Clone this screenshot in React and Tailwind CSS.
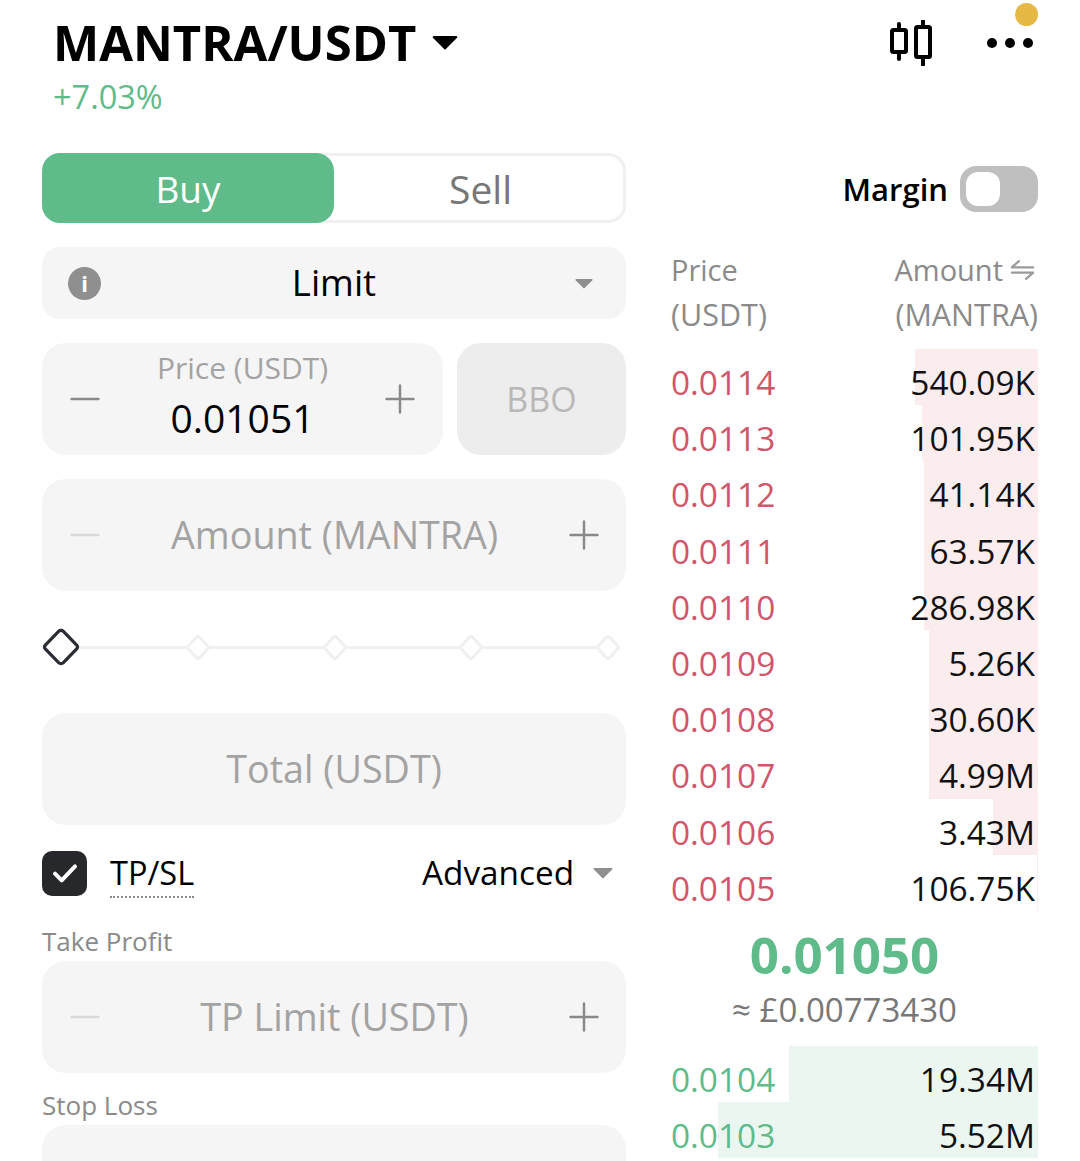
import { Plus, Minus } from 'lucide-react';

const FONT = "font-['Open_Sans','Liberation_Sans',sans-serif]";

const asks = [
  { price: '0.0114', amount: '540.09K', bar: 'w-[123px]' },
  { price: '0.0113', amount: '101.95K', bar: 'w-[116px]' },
  { price: '0.0112', amount: '41.14K', bar: 'w-[114px]' },
  { price: '0.0111', amount: '63.57K', bar: 'w-[114px]' },
  { price: '0.0110', amount: '286.98K', bar: 'w-[114px]' },
  { price: '0.0109', amount: '5.26K', bar: 'w-[109px]' },
  { price: '0.0108', amount: '30.60K', bar: 'w-[109px]' },
  { price: '0.0107', amount: '4.99M', bar: 'w-[109px]' },
  { price: '0.0106', amount: '3.43M', bar: 'w-[45px]' },
  { price: '0.0105', amount: '106.75K', bar: 'w-px' },
];

const bids = [
  { price: '0.0104', amount: '19.34M', bar: 'w-[249px]' },
  { price: '0.0103', amount: '5.52M', bar: 'w-[320px]' },
];

const Triangle = ({ className }) => (
  <svg viewBox="0 0 24 14" className={className} fill="currentColor">
    <path d="M1.5 1h21a1 1 0 0 1 .8 1.6L12.8 13a1 1 0 0 1-1.6 0L.7 2.6A1 1 0 0 1 1.5 1z" />
  </svg>
);

const Diamond = ({ active }) => (
  <svg
    viewBox="0 0 40 40"
    preserveAspectRatio="none"
    className={active ? 'w-[38px] h-[38px] text-[#2a2d33]' : 'w-[24px] h-[25px] text-[#eef0f1]'}
    fill="#fff"
    stroke="currentColor"
    strokeWidth={active ? 3.4 : 5}
  >
    <path d="M17.5 3.5a3.5 3.5 0 0 1 5 0l14 14.5a3 3 0 0 1 0 4l-14 14.5a3.5 3.5 0 0 1-5 0L3.5 22a3 3 0 0 1 0-4z" />
  </svg>
);

const Field = ({ label }) => (
  <div className="h-[112px] rounded-[24px] bg-[#f5f5f5] flex items-center justify-between pl-[20px] pr-[19px]">
    <Minus className="w-[46px] h-[46px] text-[#d9d9d9]" strokeWidth={1.3} />
    <span className="text-[37.7px] font-medium text-[#a3a3a3]">{label}</span>
    <Plus className="w-[46px] h-[46px] text-[#8a8a8a]" strokeWidth={1.3} />
  </div>
);

const Row = ({ row, color, barColor }) => (
  <div className="relative h-[56.2px] flex items-center justify-between pt-[10px] text-[33.4px]">
    <div className={`absolute right-0 top-0 bottom-0 ${row.bar} ${barColor}`} />
    <span className={`relative ${color}`}>{row.price}</span>
    <span className="relative pr-[3px] text-[#111]">{row.amount}</span>
  </div>
);

const App = () => {
  return (
    <div className={`h-[1161px] w-[1080px] overflow-hidden bg-white ${FONT}`}>
      {/* Header */}
      <div className="relative h-[153px] pl-[53px] pr-[42px] flex justify-between">
        <div>
          <div className="flex items-center h-[44px] mt-[20px]">
            <h1 className="text-[49px] leading-none font-bold text-black">MANTRA/USDT</h1>
            <Triangle className="w-[26px] h-[15px] ml-[16px] text-black" />
          </div>
          <div className="mt-[13px] text-[32.5px] leading-[40px] text-[#5fbb8a]">+7.03%</div>
        </div>
        <div className="flex items-start pt-[20px]">
          <svg viewBox="0 0 44 46" className="w-[44px] h-[46px] text-black" fill="none" stroke="currentColor" strokeWidth="4" strokeLinecap="round" strokeLinejoin="round">
            <rect x="3" y="10" width="14" height="22" rx="1.5" />
            <path d="M10 4v6M10 32v7" />
            <rect x="27" y="7" width="14" height="30" rx="1.5" />
            <path d="M34 1v6M34 37v8" />
          </svg>
          <div className="relative ml-[54px] mr-[5px] mt-[18px] flex gap-[8px]">
            <span className="w-[10px] h-[10px] rounded-full bg-black" />
            <span className="w-[10px] h-[10px] rounded-full bg-black" />
            <span className="w-[10px] h-[10px] rounded-full bg-black" />
            <span className="absolute -right-[5px] -top-[35px] w-[23px] h-[23px] rounded-full bg-[#e6b945]" />
          </div>
        </div>
      </div>

      <div className="flex pl-[42px] pr-[42px] justify-between">
        {/* Order form */}
        <div className="w-[584px]">
          <div className="h-[70px] flex rounded-[18px] border-[3px] border-[#f0f0f0] border-l-0 relative">
            <div className="w-[292px] -my-[3px] pt-[2px] rounded-[18px] bg-[#5fbb8a] flex items-center justify-center text-[37px] text-white">Buy</div>
            <div className="flex-1 pt-[2px] pl-[4px] flex items-center justify-center text-[39px] text-[#777]">Sell</div>
          </div>

          <div className="mt-[24px] h-[72px] rounded-[18px] bg-[#f5f5f5] flex items-center justify-between pl-[26px] pr-[33px]">
            <span className="w-[33px] h-[33px] rounded-full bg-[#8f8f8f] text-white flex items-center justify-center text-[22px] font-bold">i</span>
            <span className="mr-[8px] pb-[2px] text-[36.5px] text-black">Limit</span>
            <Triangle className="w-[18px] h-[11px] text-[#8f8f8f]" />
          </div>

          <div className="mt-[24px] flex gap-[14px]">
            <div className="flex-1 h-[112px] rounded-[24px] bg-[#f5f5f5] flex items-center justify-between pl-[20px] pr-[20px]">
              <Minus className="w-[46px] h-[46px] text-[#8a8a8a]" strokeWidth={1.3} />
              <div className="text-center pb-[7px]">
                <div className="text-[30px] leading-[44px] text-[#a3a3a3]">Price (USDT)</div>
                <div className="text-[39px] leading-[55px] font-medium text-black">0.01051</div>
              </div>
              <Plus className="w-[46px] h-[46px] text-[#8a8a8a]" strokeWidth={1.3} />
            </div>
            <div className="w-[169px] h-[112px] rounded-[24px] bg-[#ededed] flex items-center justify-center text-[34px] text-[#b8b8b8]">BBO</div>
          </div>

          <div className="mt-[24px]">
            <Field label="Amount (MANTRA)" />
          </div>

          {/* Slider */}
          <div className="relative mt-[37px] h-[38px] flex items-center gap-[112.5px]">
            <div className="absolute left-[20px] right-[10px] h-[3px] bg-[#eef0f1]" />
            <span className="relative -mr-[6.5px]"><Diamond active /></span>
            <span className="relative"><Diamond /></span>
            <span className="relative"><Diamond /></span>
            <span className="relative"><Diamond /></span>
            <span className="relative"><Diamond /></span>
          </div>

          <div className="mt-[47px] h-[112px] rounded-[24px] bg-[#f5f5f5] flex items-center justify-center text-[37.7px] font-medium text-[#a3a3a3]">Total (USDT)</div>

          <div className="mt-[24px] h-[48px] flex items-center justify-between">
            <div className="flex items-center">
              <span className="w-[45px] h-[45px] rounded-[10px] bg-[#26282c] flex items-center justify-center">
                <svg viewBox="0 0 24 24" className="w-[32px] h-[32px] text-white" fill="none" stroke="currentColor" strokeWidth="3" strokeLinecap="round" strokeLinejoin="round">
                  <path d="M4.5 12.5l5 5L19.5 7" />
                </svg>
              </span>
              <span className="ml-[23px] pt-[2px] text-[32.5px] leading-[46px] text-black border-b-2 border-dotted border-[#8a8a8a]">TP/SL</span>
            </div>
            <div className="flex items-center pr-[13px]">
              <span className="text-[33.3px] text-black">Advanced</span>
              <Triangle className="w-[20px] h-[12px] ml-[19px] text-[#8f8f8f]" />
            </div>
          </div>

          <div className="mt-[26px] h-[38px] text-[26px] leading-[36px] text-[#8a8a8a]">Take Profit</div>
          <Field label="TP Limit (USDT)" />
          <div className="mt-[13px] h-[38px] text-[26px] leading-[38px] text-[#8a8a8a]">Stop Loss</div>
          <div className="mt-[1px] h-[112px] rounded-[24px] bg-[#f5f5f5]" />
        </div>

        {/* Order book */}
        <div className="w-[367px]">
          <div className="h-[70px] pt-[2px] flex items-center justify-end gap-[12px]">
            <span className="text-[31px] font-semibold text-black">Margin</span>
            <div className="w-[78px] h-[46px] rounded-[16px] bg-[#bfbfbf] p-[6px]">
              <div className="w-[34px] h-[34px] rounded-[12px] bg-white" />
            </div>
          </div>
          <div className="mt-[24px] flex justify-between text-[29px] leading-[45px] text-[#8a8a8a]">
            <div>
              <div>Price</div>
              <div className="text-[30.5px]">(USDT)</div>
            </div>
            <div className="text-right">
              <div className="flex items-center justify-end gap-[7px] pr-[3px]">
                Amount
                <svg viewBox="0 0 28 24" className="w-[25px] h-[24px] text-[#9a9a9a]" fill="none" stroke="currentColor" strokeWidth="2.4" strokeLinecap="round" strokeLinejoin="round">
                  <path d="M26 9H2l8-7M2 15h24l-8 7" />
                </svg>
              </div>
              <div className="text-[30.5px]">(MANTRA)</div>
            </div>
          </div>
          <div className="mt-[12px]">
            {asks.map((row) => (
              <Row key={row.price} row={row} color="text-[#d0566a]" barColor="bg-[#fbeced]" />
            ))}
          </div>
          <div className="h-[135px] flex flex-col items-center pt-[13px] pr-[20px]">
            <div className="text-[51px] leading-[60px] font-bold text-[#5fbb8a]">0.01050</div>
            <div className="mt-[4px] text-[33px] leading-[44px] text-[#777]">≈ £0.00773430</div>
          </div>
          <div>
            {bids.map((row) => (
              <Row key={row.price} row={row} color="text-[#5fbb8a]" barColor="bg-[#ecf6f1]" />
            ))}
          </div>
        </div>
      </div>
    </div>
  );
};

export default App;
